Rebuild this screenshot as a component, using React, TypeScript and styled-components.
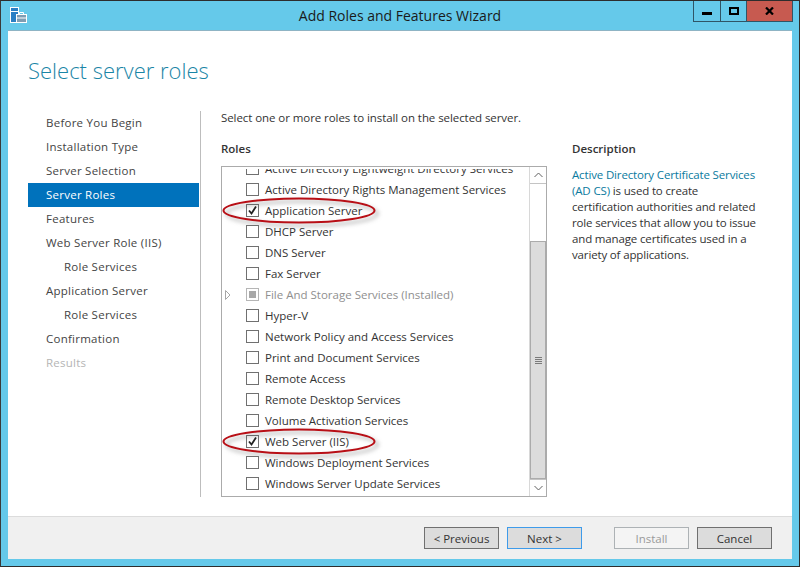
import React from 'react';
import styled, {createGlobalStyle} from 'styled-components';

const GlobalStyle = createGlobalStyle`
    html, body {
        margin: 0;
        padding: 0;
        background: #fff;
    }

    body {
        font-family: "Open Sans", "Noto Sans", sans-serif;
        font-size: 11.5px;
        color: #333;
    }
`;

const steps = [
    {label: 'Before You Begin'},
    {label: 'Installation Type'},
    {label: 'Server Selection'},
    {label: 'Server Roles', active: true},
    {label: 'Features'},
    {label: 'Web Server Role (IIS)'},
    {label: 'Role Services', nested: true},
    {label: 'Application Server'},
    {label: 'Role Services', nested: true},
    {label: 'Confirmation'},
    {label: 'Results', disabled: true},
];

type Role = {
    label: string;
    checked?: boolean;
    disabled?: boolean;
    expandable?: boolean;
    circled?: boolean;
};

const roles: Role[] = [
    {label: 'Active Directory Lightweight Directory Services'},
    {label: 'Active Directory Rights Management Services'},
    {label: 'Application Server', checked: true, circled: true},
    {label: 'DHCP Server'},
    {label: 'DNS Server'},
    {label: 'Fax Server'},
    {label: 'File And Storage Services (Installed)', disabled: true, expandable: true},
    {label: 'Hyper-V'},
    {label: 'Network Policy and Access Services'},
    {label: 'Print and Document Services'},
    {label: 'Remote Access'},
    {label: 'Remote Desktop Services'},
    {label: 'Volume Activation Services'},
    {label: 'Web Server (IIS)', checked: true, circled: true},
    {label: 'Windows Deployment Services'},
    {label: 'Windows Server Update Services'},
];

const AppIcon = () => (
    <svg width="17" height="17" viewBox="0 0 17 17">
        <rect x="0.5" y="0.5" width="8" height="15" fill="#2a7fc4" stroke="#fff" />
        <rect x="1" y="4" width="7" height="1" fill="#fff" />
        <rect x="6.5" y="7.5" width="10" height="8" fill="#7f9db3" stroke="#fff" />
        <path d="M9.5 7.5V5.5h4v2M7 11h9" fill="none" stroke="#fff" />
    </svg>
);

const CircleMark = () => (
    <Circle width="160" height="30" viewBox="0 0 160 30">
        <ellipse cx="77" cy="12.5" rx="75.5" ry="12" fill="none" stroke="#b80f16" strokeWidth="2" />
    </Circle>
);

export default function App() {
    return (
        <>
            <GlobalStyle />
            <Frame>
                <TitleBar>
                    <IconSlot><AppIcon /></IconSlot>
                    <Title>Add Roles and Features Wizard</Title>
                    <WindowButtons>
                        <MinButton>
                            <svg width="10" height="3"><rect width="10" height="3" fill="#000" /></svg>
                        </MinButton>
                        <MaxButton>
                            <svg width="10" height="8">
                                <rect x="1" y="1" width="8" height="6" fill="none" stroke="#000" strokeWidth="2" />
                            </svg>
                        </MaxButton>
                        <CloseButton>
                            <svg width="9" height="8" viewBox="0 0 9 8">
                                <path d="M1 0.5L8 7.5M8 0.5L1 7.5" stroke="#000" strokeWidth="2.2" />
                            </svg>
                        </CloseButton>
                    </WindowButtons>
                </TitleBar>
                <Client>
                    <Main>
                        <Heading>Select server roles</Heading>
                        <Columns>
                            <Sidebar>
                                {steps.map((s, i) => (
                                    <Step key={i} $active={s.active} $nested={s.nested} $disabled={s.disabled}>
                                        {s.label}
                                    </Step>
                                ))}
                            </Sidebar>
                            <Content>
                                <Intro>Select one or more roles to install on the selected server.</Intro>
                                <Panels>
                                    <RolesPanel>
                                        <PanelTitle>Roles</PanelTitle>
                                        <ListBox>
                                            <RowsClip>
                                                <Rows>
                                                    {roles.map(r => (
                                                        <RoleRow key={r.label} $disabled={r.disabled}>
                                                            <Arrow>
                                                                {r.expandable && (
                                                                    <svg width="6" height="10" viewBox="0 0 6 10">
                                                                        <path d="M0.5 0.5L5 5L0.5 9.5Z" fill="#fff" stroke="#a6a6a6" />
                                                                    </svg>
                                                                )}
                                                            </Arrow>
                                                            <CheckBox $disabled={r.disabled}>
                                                                {r.checked && (
                                                                    <svg width="11" height="11" viewBox="0 0 11 11">
                                                                        <path d="M2 5.5L4.5 8.5L9 1.5" fill="none" stroke="#222" strokeWidth="1.8" />
                                                                    </svg>
                                                                )}
                                                                {r.disabled && <Partial />}
                                                            </CheckBox>
                                                            <span>{r.label}</span>
                                                            {r.circled && <CircleMark />}
                                                        </RoleRow>
                                                    ))}
                                                </Rows>
                                            </RowsClip>
                                            <ScrollBar>
                                                <ScrollButton>
                                                    <svg width="9" height="6" viewBox="0 0 9 6">
                                                        <path d="M0.5 5L4.5 1L8.5 5" fill="none" stroke="#606060" />
                                                    </svg>
                                                </ScrollButton>
                                                <TrackTop />
                                                <Thumb>
                                                    <svg width="7" height="7">
                                                        <path d="M0 .5H7M0 2.5H7M0 4.5H7M0 6.5H7" stroke="#7a7a7a" />
                                                    </svg>
                                                </Thumb>
                                                <ScrollButton $bottom>
                                                    <svg width="9" height="6" viewBox="0 0 9 6">
                                                        <path d="M0.5 1L4.5 5L8.5 1" fill="none" stroke="#606060" />
                                                    </svg>
                                                </ScrollButton>
                                            </ScrollBar>
                                        </ListBox>
                                    </RolesPanel>
                                    <Description>
                                        <PanelTitle>Description</PanelTitle>
                                        <DescriptionText>
                                            <RoleLink>Active Directory Certificate Services (AD CS)</RoleLink> is used to create
                                            certification authorities and related role services that allow you to issue
                                            and manage certificates used in a variety of applications.
                                        </DescriptionText>
                                    </Description>
                                </Panels>
                            </Content>
                        </Columns>
                    </Main>
                    <Footer>
                        <Button>&lt; Previous</Button>
                        <Button $focused>Next &gt;</Button>
                        <InstallButton disabled>Install</InstallButton>
                        <Button>Cancel</Button>
                    </Footer>
                </Client>
            </Frame>
        </>
    );
}

const Frame = styled.div`
    width: 800px;
    height: 567px;
    box-sizing: border-box;
    background: #65c9ea;
    border: 1px solid #2d2d2d;
    border-left-color: #3a3a3a;
    display: flex;
    flex-direction: column;
    padding: 0 7px 7px 7px;
    overflow: hidden;
`;

const TitleBar = styled.div`
    height: 29px;
    flex: none;
    display: flex;
    align-items: flex-start;
`;

const IconSlot = styled.div`
    margin: 6px 0 0 2px;
    width: 17px;
    height: 17px;
`;

const Title = styled.div`
    flex: 1;
    text-align: center;
    font-size: 14px;
    line-height: 30px;
    color: #1a1a1a;
    padding-left: 80px;
`;

const WindowButtons = styled.div`
    display: flex;
    height: 21px;
    margin-right: -1px;
    border: 1px solid #2f5566;
    border-top: none;
    box-sizing: border-box;
`;

const WindowButton = styled.div`
    display: flex;
    align-items: center;
    justify-content: center;
    height: 100%;
`;

const MinButton = styled(WindowButton)`
    width: 27px;
    border-right: 1px solid #2f5566;
    padding-top: 5px;
    box-sizing: border-box;
`;

const MaxButton = styled(WindowButton)`
    width: 25px;
    border-right: 1px solid #2f5566;
`;

const CloseButton = styled(WindowButton)`
    width: 45px;
    background: #c75a50;
`;

const Client = styled.div`
    flex: 1;
    display: flex;
    flex-direction: column;
    background: #fff;
    border-top: 1px solid #8fb4c4;
    min-height: 0;
`;

const Main = styled.div`
    flex: 1;
    display: flex;
    flex-direction: column;
    padding: 0 0 19px 20px;
    min-height: 0;
`;

const Heading = styled.h1`
    margin: 25px 0 0;
    height: 55px;
    flex: none;
    font-size: 22px;
    font-weight: 300;
    line-height: 29px;
    color: #1a85a6;
`;

const Columns = styled.div`
    flex: 1;
    display: flex;
    min-height: 0;
`;

const Sidebar = styled.div`
    width: 172px;
    flex: none;
    border-right: 1px solid #bdbdbd;
`;

const Step = styled.div<{$active?: boolean; $nested?: boolean; $disabled?: boolean}>`
    height: 24px;
    line-height: 24px;
    letter-spacing: 0.25px;
    margin-right: 1px;
    padding-left: ${p => (p.$nested ? '36px' : '18px')};
    background: ${p => (p.$active ? '#0072bc' : 'transparent')};
    color: ${p => (p.$active ? '#fff' : p.$disabled ? '#b5b5b5' : '#444')};
`;

const Content = styled.div`
    flex: 1;
    padding-left: 20px;
    display: flex;
    flex-direction: column;
    min-width: 0;
`;

const Intro = styled.div`
    height: 31px;
    line-height: 13px;
    letter-spacing: -0.07px;
    color: #333;
`;

const Panels = styled.div`
    flex: 1;
    display: flex;
    min-height: 0;
`;

const RolesPanel = styled.div`
    width: 326px;
    flex: none;
    display: flex;
    flex-direction: column;
`;

const PanelTitle = styled.div`
    height: 24px;
    line-height: 13px;
    font-weight: 600;
    color: #333;
`;

const ListBox = styled.div`
    flex: 1;
    display: flex;
    border: 1px solid #ababab;
    min-height: 0;
`;

const RowsClip = styled.div`
    flex: 1;
    margin-top: 2px;
    min-width: 0;
    overflow: hidden;
`;

const Rows = styled.div`
    margin-top: -11px;
`;

const RoleRow = styled.div<{$disabled?: boolean}>`
    position: relative;
    height: 21px;
    display: flex;
    align-items: center;
    color: ${p => (p.$disabled ? '#8f8f8f' : '#333')};
    white-space: nowrap;
`;

const Arrow = styled.div`
    width: 24px;
    flex: none;
    display: flex;
    justify-content: center;
    padding-left: 1px;
    box-sizing: border-box;
    margin-left: -7px;
    margin-right: 7px;
`;

const CheckBox = styled.div<{$disabled?: boolean}>`
    width: 13px;
    height: 13px;
    box-sizing: border-box;
    border: 1px solid ${p => (p.$disabled ? '#b5b5b5' : '#707070')};
    margin-right: 6px;
    flex: none;
    display: flex;
    align-items: center;
    justify-content: center;
    background: #fff;
`;

const Partial = styled.div`
    width: 7px;
    height: 7px;
    background: #a8a8a8;
`;

const Circle = styled.svg`
    position: absolute;
    left: 0;
    top: -2px;
    overflow: visible;
    pointer-events: none;
    filter: drop-shadow(3px 3px 2px rgba(80, 80, 80, 0.5));
`;

const ScrollBar = styled.div`
    width: 17px;
    flex: none;
    display: flex;
    flex-direction: column;
    background: #fff;
    border-left: 1px solid #d8d8d8;
    box-sizing: border-box;
`;

const ScrollButton = styled.div<{$bottom?: boolean}>`
    height: 17px;
    flex: none;
    display: flex;
    align-items: center;
    justify-content: center;
    border-${p => (p.$bottom ? 'top' : 'bottom')}: 1px solid #c4c4c4;
    box-sizing: border-box;
`;

const TrackTop = styled.div`
    height: 57px;
    flex: none;
`;

const Thumb = styled.div`
    flex: 1;
    background: #dcdcdc;
    border: 1px solid #ababab;
    display: flex;
    align-items: center;
    justify-content: center;
`;

const Description = styled.div`
    flex: 1;
    padding-left: 25px;
    padding-right: 30px;
`;

const DescriptionText = styled.p`
    margin: 1px 0 0;
    line-height: 16px;
    letter-spacing: -0.15px;
    color: #333;
`;

const RoleLink = styled.span`
    color: #0a7a9e;
`;

const Footer = styled.div`
    height: 42px;
    flex: none;
    background: #f0f0f0;
    border-top: 1px solid #dcdcdc;
    display: flex;
    align-items: center;
    justify-content: flex-end;
    padding: 0 20px 0 0;
    gap: 8px;
`;

const Button = styled.button<{$focused?: boolean}>`
    width: 75px;
    height: 22px;
    padding: 0;
    font: inherit;
    color: #333;
    background: #dcdcdc;
    border: 1px solid ${p => (p.$focused ? '#3e9bea' : '#707070')};
`;

const InstallButton = styled(Button)`
    margin-left: 24px;
    background: #f4f4f4;
    border-color: #adb2b5;
    color: #9a9a9a;
`;
